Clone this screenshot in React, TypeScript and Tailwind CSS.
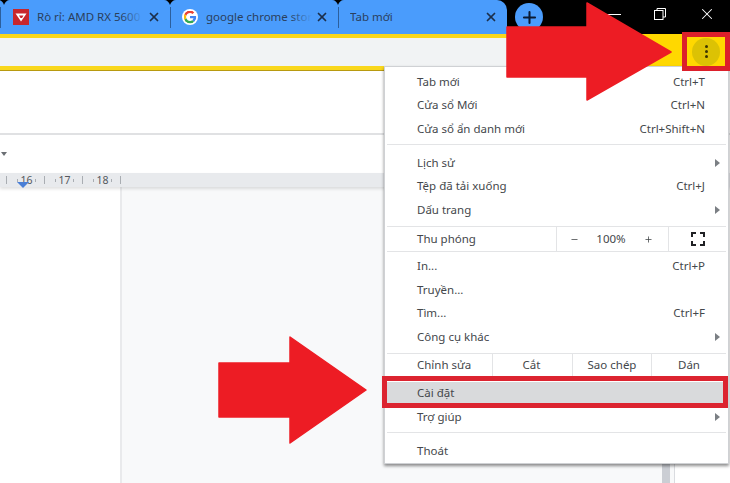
import { X, Plus, Minus } from 'lucide-react'

const font = { fontFamily: '"Noto Sans", "Open Sans", sans-serif' }

function Tab({ title, icon, width, iconGap = 'ml-[12px]', fade }: { title: string; icon?: React.ReactNode; width: string; iconGap?: string; fade?: boolean }) {
  return (
    <div className={`${width} h-full relative flex items-center`}>
      <div className="w-px h-[21px] bg-[#2c5f9c]" />
      {icon && <div className={`${iconGap} w-4 h-4 shrink-0`}>{icon}</div>}
      <div className={`${icon ? 'ml-[8px]' : 'ml-[11px]'} w-[106px] relative overflow-hidden whitespace-nowrap text-[11.5px] text-[#2a405c]`}>
        {title}
        {fade && <div className="absolute right-0 top-0 h-full w-[22px] bg-gradient-to-r from-transparent to-[#4a9cfc]" />}
      </div>
      <X className="absolute right-[9px] top-[10px] w-[14px] h-[14px] text-[#1c2f4a]" strokeWidth={3} />
    </div>
  )
}

function Notch({ left }: { left: string }) {
  return (
    <svg className={`absolute top-0 ${left} w-[12px] h-[5px]`} viewBox="0 0 12 5">
      <path d="M0 0 C3 0 5 2 6 5 C7 2 9 0 12 0 Z" fill="#000" />
    </svg>
  )
}

function TlgIcon() {
  return (
    <svg viewBox="0 0 16 16" className="w-4 h-4">
      <rect width="16" height="16" fill="#c8262c" />
      <path d="M2.5 4.5 H13.5 L8 12.5 Z" fill="#fff" />
      <path d="M6 6.5 H10.5 L9 9 H7.5 Z" fill="#c8262c" />
    </svg>
  )
}

function GoogleIcon() {
  return (
    <svg viewBox="0 0 48 48" className="w-4 h-4 rounded-full bg-white p-[1.5px]">
      <path fill="#EA4335" d="M24 9.5c3.5 0 6.700 1.200 9.200 3.600l6.900-6.900C35.900 2.400 30.500 0 24 0 14.600 0 6.500 5.400 2.600 13.200l8 6.200C12.400 13.700 17.700 9.500 24 9.500z" />
      <path fill="#4285F4" d="M47 24.500c0-1.600-.1-3.100-.4-4.500H24v9h12.900c-.6 3-2.200 5.500-4.700 7.200l7.700 6C44.400 38 47 31.800 47 24.500z" />
      <path fill="#FBBC05" d="M10.500 28.600c-.5-1.400-.8-3-.8-4.600s.3-3.200.8-4.600l-8-6.200C.9 16.500 0 20.100 0 24s.9 7.500 2.600 10.800l7.900-6.200z" />
      <path fill="#34A853" d="M24 48c6.500 0 11.900-2.100 15.900-5.800l-7.700-6c-2.100 1.400-4.900 2.300-8.200 2.300-6.300 0-11.600-4.200-13.500-9.900l-8 6.200C6.500 42.600 14.600 48 24 48z" />
    </svg>
  )
}

function Row({ label, right, arrow, className = '' }: { label: string; right?: string; arrow?: boolean; className?: string }) {
  return (
    <div className={`h-[23.5px] flex items-center pl-[32px] pr-[23px] pb-[1.5px] relative ${className}`}>
      <span className="flex-1">{label}</span>
      {right && <span>{right}</span>}
      {arrow && <div className="absolute right-[8px] top-[7px] w-0 h-0 border-y-[4px] border-y-transparent border-l-[5px] border-l-[#7b7f84]" />}
    </div>
  )
}

function Sep({ className }: { className: string }) {
  return <div className={`h-px bg-[#e3e4e6] mx-[2px] ${className}`} />
}

function RulerCell({ n }: { n?: number }) {
  return (
    <div className="w-[38px] shrink-0 h-full relative flex items-center">
      <div className="w-px h-[8px] bg-[#a9adb2]" />
      <div className="w-px h-[3px] bg-[#a9adb2] ml-[10px]" />
      <div className="w-[17px] text-center text-[10.5px] text-[#55595e] leading-none">{n}</div>
      <div className="w-px h-[3px] bg-[#a9adb2]" />
    </div>
  )
}

function RedArrow({ className, d, w, h }: { className: string; d: string; w: number; h: number }) {
  return (
    <svg className={`absolute ${className}`} width={w} height={h} viewBox={`0 0 ${w} ${h}`}>
      <path d={d} fill="#ed1c24" stroke="#ed1c24" strokeWidth="1.5" strokeLinejoin="round" />
    </svg>
  )
}

export default function App() {
  return (
    <div className="w-[730px] h-[483px] relative overflow-hidden bg-white flex flex-col" style={font}>
      {/* tab strip */}
      <div className="h-[34px] bg-black flex relative shrink-0">
        <div className="w-[507px] h-full bg-[#4a9cfc] rounded-tr-[10px] flex relative">
          <Tab title="Rò rỉ: AMD RX 5600" icon={<TlgIcon />} width="w-[170px]" fade />
          <Tab title="google chrome stor" icon={<GoogleIcon />} width="w-[168px]" iconGap="ml-[11px]" fade />
          <Tab title="Tab mới" width="w-[169px]" />
          <Notch left="left-[-2px]" />
          <Notch left="left-[164px]" />
          <Notch left="left-[332px]" />
        </div>
        <div className="ml-[8px] mt-[3px] w-[28px] h-[28px] rounded-full bg-[#4a9cfc] flex items-center justify-center">
          <Plus className="w-[19px] h-[19px] text-[#0b1a33]" strokeWidth={2.6} />
        </div>
        <div className="ml-auto flex items-center h-[28px] text-white">
          <div className="w-[14px] h-px bg-white mr-[33px]" />
          <svg viewBox="0 0 12 12" className="w-[12px] h-[12px] mr-[32px]" fill="none" stroke="#fff" strokeWidth="1">
            <rect x="0.500" y="2.500" width="8.500" height="9" />
            <path d="M3 2.500 V0.500 H11.500 V9 H9" />
          </svg>
          <X className="w-[18px] h-[18px] mr-[14px]" strokeWidth={1.4} />
        </div>
      </div>

      {/* toolbar */}
      <div className="h-[32px] flex shrink-0">
        <div className="w-[507px] flex flex-col">
          <div className="h-[4px] bg-[#f9d71c]" />
          <div className="flex-1 bg-[#f1f3f4]" />
        </div>
        <div className="flex-1 bg-[#ffd800]" />
      </div>
      <div className="h-[4px] bg-[#f9d71c] shrink-0" />
      <div className="h-px bg-[#b89a10] shrink-0" />

      {/* document header */}
      <div className="h-[64px] bg-white border-b-2 border-[#e0e1e3] shrink-0" />
      <div className="h-[38px] bg-white pl-[1px] flex items-center shrink-0">
        <div className="w-0 h-0 border-x-[3.500px] border-x-transparent border-t-[4px] border-t-[#6b6f74] -mt-[1px]" />
      </div>

      {/* ruler */}
      <div className="h-[14px] bg-[#e8eaed] flex items-center relative shrink-0 pl-[6px] shadow-[0_2px_3px_rgba(0,0,0,0.12)] z-10">
        <RulerCell n={16} />
        <RulerCell n={17} />
        <RulerCell n={18} />
        <div className="w-px h-[8px] bg-[#a9adb2]" />
        <div className="absolute left-[17px] top-[9px] w-0 h-0 border-x-[6px] border-x-transparent border-t-[6px] border-t-[#4a7fd6]" />
      </div>

      {/* page */}
      <div className="flex-1 flex bg-[#f8f9fa]">
        <div className="w-[120px] bg-white border-r-2 border-[#e9eaec] box-content" />
        <div className="flex-1" />
        <div className="w-[8px] bg-[#cbced4]" />
        <div className="w-[4px]" />
        <div className="w-[56px] bg-white border-l border-[#dadce0]" />
      </div>

      {/* chrome menu */}
      <div className="absolute left-[384px] top-[66px] w-[345px] h-[398px] bg-white border border-[#cfd1d4] shadow-[0_2px_3px_rgba(0,0,0,0.45)] text-[11.5px] text-[#44474b] pt-[3.5px] z-20">
        <Row label="Tab mới" right="Ctrl+T" />
        <Row label="Cửa sổ Mới" right="Ctrl+N" />
        <Row label="Cửa sổ ẩn danh mới" right="Ctrl+Shift+N" />
        <Sep className="mt-[2.5px] mb-[7px]" />
        <Row label="Lịch sử" arrow />
        <Row label="Tệp đã tải xuống" right="Ctrl+J" />
        <Row label="Dấu trang" arrow />
        <Sep className="mt-[4px]" />
        <div className="h-[24px] flex items-center pl-[32px]">
          <span className="w-[139px]">Thu phóng</span>
          <div className="w-[112px] h-full border-l border-[#e3e4e6] flex items-center">
            <Minus className="ml-[13px] w-[9px] h-[9px] text-[#3c4043]" strokeWidth={2} />
            <span className="ml-[16px] w-[32px] text-center">100%</span>
            <Plus className="ml-[17px] w-[9px] h-[9px] text-[#3c4043]" strokeWidth={2} />
          </div>
          <div className="flex-1 h-full border-l border-[#e3e4e6] flex items-center justify-center pr-[2px]">
            <svg viewBox="0 0 14 14" className="w-[14px] h-[14px]" fill="none" stroke="#202124" strokeWidth="2">
              <path d="M1 5 V1 H5 M9 1 H13 V5 M13 9 V13 H9 M5 13 H1 V9" />
            </svg>
          </div>
        </div>
        <Sep className="mb-[3px]" />
        <Row label="In..." right="Ctrl+P" />
        <Row label="Truyền..." />
        <Row label="Tìm..." right="Ctrl+F" />
        <Row label="Công cụ khác" arrow />
        <Sep className="mt-[4px]" />
        <div className="h-[24px] flex items-center pl-[32px] mb-[4px]">
          <span className="w-[75px] pb-[2px]">Chỉnh sửa</span>
          <div className="w-[80px] h-full border-l border-[#e3e4e6] flex items-center justify-center pr-[2px] pb-[2px]">Cắt</div>
          <div className="w-[79px] h-full border-l border-[#e3e4e6] flex items-center justify-center pb-[2px]">Sao chép</div>
          <div className="flex-1 h-full border-l border-[#e3e4e6] flex items-center justify-center pr-[2px] pb-[2px]">Dán</div>
        </div>
        <Row label="Cài đặt" className="bg-[#d9dadc]" />
        <Row label="Trợ giúp" arrow />
        <Sep className="mt-[3px] mb-[7px]" />
        <Row label="Thoát" />
      </div>

      {/* annotations */}
      <div className="absolute left-[682px] top-[32px] w-[48px] h-[39px] border-[5px] border-[#dc1f2b] bg-[#ffd800] z-30 flex items-center justify-center">
        <div className="w-[28px] h-[28px] rounded-full bg-[#dcc204] flex flex-col items-center justify-center gap-[2px]">
          <div className="w-[3px] h-[3px] rounded-full bg-[#3c3500]" />
          <div className="w-[3px] h-[3px] rounded-full bg-[#3c3500]" />
          <div className="w-[3px] h-[3px] rounded-full bg-[#3c3500]" />
        </div>
      </div>
      <div className="absolute left-[382px] top-[376px] w-[346px] h-[32px] border-[5px] border-[#dc2430] z-30" />
      <RedArrow className="left-[506px] top-[2px] z-30" w={166} h={99} d="M1 25 H81 V1 L165 50 L81 98 V75 H1 Z" />
      <RedArrow className="left-[218px] top-[336px] z-30" w={150} h={108} d="M1 27 H72 V1 L148 54 L72 107 V81 H1 Z" />
    </div>
  )
}
